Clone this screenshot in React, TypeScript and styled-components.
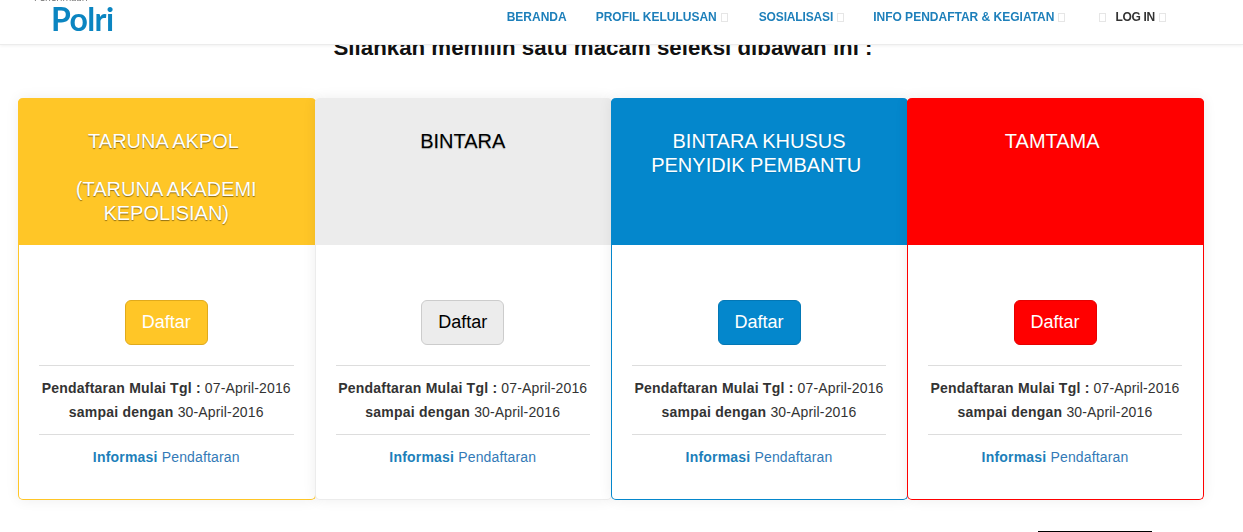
import React from 'react';
import styled, { createGlobalStyle } from 'styled-components';

const GlobalStyle = createGlobalStyle`
  html, body {
    margin: 0;
    padding: 0;
    background: #ffffff;
    font-family: "Liberation Sans", Arial, sans-serif;
    overflow: hidden;
  }
  * {
    box-sizing: border-box;
  }
`;

const Header = styled.header`
  position: fixed;
  top: 0;
  left: 0;
  right: 0;
  height: 45px;
  display: flex;
  justify-content: space-between;
  background: #ffffff;
  border-bottom: 1px solid #ececec;
  box-shadow: 0 1px 3px rgba(0, 0, 0, 0.06);
  overflow: hidden;
  z-index: 10;
`;

const Logo = styled.div`
  margin-left: 34px;
  margin-top: -8px;
  display: flex;
  flex-direction: column;
`;

const LogoSmall = styled.span`
  font-family: "Open Sans", sans-serif;
  font-size: 9.5px;
  line-height: 12px;
  color: #666666;
`;

const LogoMain = styled.span`
  margin-left: 17px;
  margin-top: -1px;
  font-family: Lato, sans-serif;
  font-size: 32px;
  line-height: 32px;
  font-weight: 700;
  letter-spacing: -0.6px;
  color: #0b85c1;
`;

const Nav = styled.nav`
  display: flex;
  align-items: flex-start;
  padding-top: 10px;
  margin-right: 77px;
`;

const NavItem = styled.a<{ $dark?: boolean; $gap: number; $track?: number }>`
  display: flex;
  align-items: center;
  height: 14px;
  margin-left: ${(p) => p.$gap}px;
  font-size: 12px;
  font-weight: 700;
  letter-spacing: ${(p) => p.$track || 0}px;
  color: ${(p) => (p.$dark ? '#333333' : '#1d7fba')};
`;

const Tofu = styled.i<{ $before?: boolean }>`
  display: inline-block;
  width: 7px;
  height: 9px;
  margin: ${(p) => (p.$before ? '0 9px 0 0' : '0 0 0 4px')};
  border: 1px solid #e6e6e6;
`;

const Main = styled.main`
  padding-top: 37px;
`;

const Title = styled.h2`
  margin: 0 0 39px;
  padding-right: 37px;
  font-size: 22.3px;
  line-height: 22px;
  font-weight: 700;
  text-align: center;
  color: #111111;
`;

const Cards = styled.div`
  display: grid;
  grid-template-columns: 296.5px 296.5px 296px 296px;
  margin-left: 18px;
`;

// each card runs 1px under the next one, so neighbours share one border line
const Card = styled.section<{ $line: string }>`
  position: relative;
  height: 402px;
  margin-right: -1px;
  border: 1px solid ${(p) => p.$line};
  border-top: 0;
  border-radius: 5px;
  background: #ffffff;
  box-shadow: 0 0 14px rgba(0, 0, 0, 0.07);
  text-align: center;
`;

const CardHead = styled.div<{ $bg: string; $fg: string; $shadow: string }>`
  height: 147px;
  margin: 0 -1px;
  padding: 31px 21px 0 20px;
  border-radius: 5px 5px 0 0;
  background: ${(p) => p.$bg};
  color: ${(p) => p.$fg};
  font-size: 20px;
  line-height: 24px;
  text-shadow: 0 1px 1px ${(p) => p.$shadow};
`;

const CardBody = styled.div`
  padding: 55px 21px 0 20px;
`;

const Button = styled.button<{ $bg: string; $edge: string; $fg: string }>`
  display: block;
  width: 83px;
  height: 45px;
  margin: 0 auto 20px;
  padding: 0;
  border: 1px solid ${(p) => p.$edge};
  border-radius: 6px;
  background: ${(p) => p.$bg};
  color: ${(p) => p.$fg};
  font-family: "Liberation Sans", Arial, sans-serif;
  font-size: 18px;
`;

const Dates = styled.div`
  padding: 10px 0 10px;
  border-top: 1px solid #dddddd;
  border-bottom: 1px solid #dddddd;
  font-size: 14px;
  line-height: 24px;
  letter-spacing: 0.15px;
  color: #333333;
  white-space: nowrap;

  b {
    letter-spacing: 0.22px;
  }
`;

const InfoLink = styled.a`
  display: block;
  margin-top: 11px;
  font-size: 14px;
  line-height: 22px;
  letter-spacing: 0.15px;
  color: #337ab7;

  b {
    color: #1d7fba;
    letter-spacing: 0.2px;
  }
`;

const FooterRule = styled.div`
  width: 114px;
  margin: 31px 0 0 1038px;
  border-top: 1px solid #000000;
`;

const links = [
  { label: 'BERANDA', gap: 0, tofu: false, track: 0 },
  { label: 'PROFIL KELULUSAN', gap: 29, tofu: true, track: 0 },
  { label: 'SOSIALISASI', gap: 31, tofu: true, track: -0.15 },
  { label: 'INFO PENDAFTAR & KEGIATAN', gap: 29, tofu: true, track: 0 },
];

const cards = [
  {
    title: ['TARUNA AKPOL\u00a0', '', '(TARUNA AKADEMI', 'KEPOLISIAN)'],
    bg: '#ffc627',
    fg: '#ffffff',
    shadow: 'rgba(0,0,0,0.45)',
    edge: '#e0aa1c',
  },
  {
    title: ['BINTARA'],
    bg: '#ececec',
    fg: '#000000',
    shadow: 'rgba(0,0,0,0.3)',
    edge: '#cccccc',
  },
  {
    title: ['BINTARA KHUSUS', 'PENYIDIK PEMBANTU\u00a0'],
    bg: '#0487cc',
    fg: '#ffffff',
    shadow: 'rgba(0,0,0,0.1)',
    edge: '#0377b5',
  },
  {
    title: ['TAMTAMA\u00a0'],
    bg: '#ff0000',
    fg: '#ffffff',
    shadow: 'rgba(0,0,0,0.1)',
    edge: '#e60000',
  },
];

const App: React.FC = () => {
  return (
    <>
      <GlobalStyle />
      <Header>
        <Logo>
          <LogoSmall>Penerimaan</LogoSmall>
          <LogoMain>Polri</LogoMain>
        </Logo>
        <Nav>
          {links.map((link) => (
            <NavItem key={link.label} $gap={link.gap} $track={link.track}>
              {link.label}
              {link.tofu && <Tofu />}
            </NavItem>
          ))}
          <NavItem $dark $gap={34} $track={-0.3}>
            <Tofu $before />
            LOG IN
            <Tofu />
          </NavItem>
        </Nav>
      </Header>
      <Main>
        <Title>Silahkan memilih satu macam seleksi dibawah ini :</Title>
        <Cards>
          {cards.map((card) => (
            <Card key={card.bg} $line={card.bg}>
              <CardHead $bg={card.bg} $fg={card.fg} $shadow={card.shadow}>
                {card.title.map((line, i) => (
                  <div key={i}>{line || '\u00a0'}</div>
                ))}
              </CardHead>
              <CardBody>
                <Button $bg={card.bg} $edge={card.edge} $fg={card.fg}>
                  Daftar
                </Button>
                <Dates>
                  <div>
                    <b>Pendaftaran Mulai Tgl :</b> 07-April-2016
                  </div>
                  <div>
                    <b>sampai dengan</b> 30-April-2016
                  </div>
                </Dates>
                <InfoLink>
                  <b>Informasi</b> Pendaftaran
                </InfoLink>
              </CardBody>
            </Card>
          ))}
        </Cards>
        <FooterRule />
      </Main>
    </>
  );
};

export default App;
